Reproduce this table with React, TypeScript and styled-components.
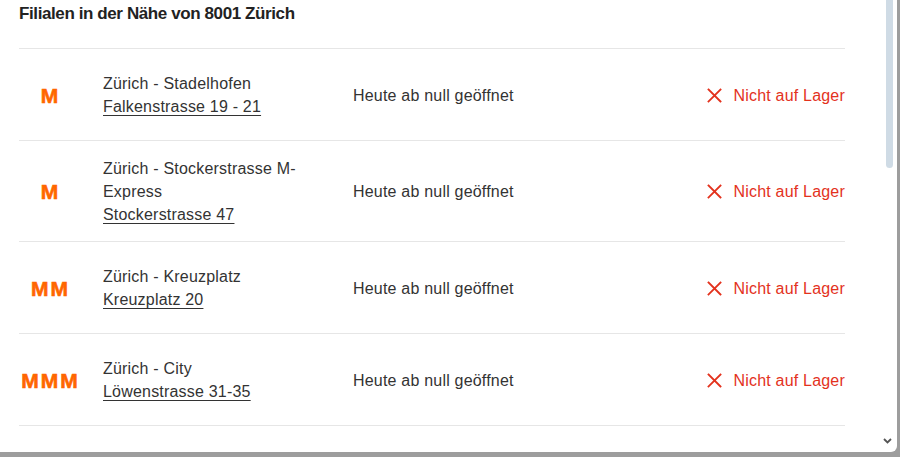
import styled, { createGlobalStyle } from 'styled-components';

const GlobalStyle = createGlobalStyle`
  html, body {
    margin: 0;
    padding: 0;
    background: #9d9d9d;
  }
  * {
    box-sizing: border-box;
  }
`;

const Backdrop = styled.div`
  width: 900px;
  height: 457px;
  overflow: hidden;
  background: #9d9d9d;
`;

const Panel = styled.div`
  position: relative;
  width: 897px;
  height: 452px;
  background: #fff;
  border-bottom-right-radius: 6px;
  overflow: hidden;
  font-family: 'Liberation Sans', Arial, sans-serif;
  color: #333;
`;

const Content = styled.div`
  width: 845px;
  padding-left: 19px;
`;

const Title = styled.h2`
  margin: 0;
  padding: 2px 0 22px;
  font-size: 17px;
  line-height: 24px;
  font-weight: 700;
  letter-spacing: -0.4px;
  color: #222;
`;

const List = styled.ul`
  list-style: none;
  margin: 0;
  padding: 0;
  border-top: 1px solid #e6e6e6;
`;

const Row = styled.li`
  display: grid;
  grid-template-columns: 84px 250px 1fr auto;
  align-items: center;
  min-height: 92px;
  padding: 16px 0 15px;
  border-bottom: 1px solid #e6e6e6;
  font-size: 16px;
  line-height: 23px;
  letter-spacing: 0.2px;
`;

const Logo = styled.div`
  width: 61px;
  text-align: center;
  font-size: 21px;
  line-height: 23px;
  font-weight: 700;
  letter-spacing: 2px;
  padding-left: 2px;
  color: #ff6600;
  -webkit-text-stroke: 0.6px #ff6600;
`;

const Store = styled.div`
  padding-right: 20px;
`;

const StoreName = styled.div``;

const Address = styled.a`
  display: block;
  color: #333;
  text-decoration: underline;
  text-underline-offset: 3px;
  text-decoration-thickness: 1px;
`;

const Hours = styled.div``;

const Stock = styled.div`
  display: flex;
  align-items: center;
  gap: 11px;
  color: #e3321d;
`;

const ScrollThumb = styled.div`
  position: absolute;
  top: 0;
  right: 4px;
  width: 7px;
  height: 168px;
  background: #cfdbe5;
  border-radius: 0 0 4px 4px;
`;

const ScrollArrow = styled.svg`
  position: absolute;
  right: 5px;
  bottom: 8px;
`;

const stores = [
  { logo: 'M', name: 'Zürich - Stadelhofen', address: 'Falkenstrasse 19 - 21' },
  { logo: 'M', name: 'Zürich - Stockerstrasse M-Express', address: 'Stockerstrasse 47' },
  { logo: 'MM', name: 'Zürich - Kreuzplatz', address: 'Kreuzplatz 20' },
  { logo: 'MMM', name: 'Zürich - City', address: 'Löwenstrasse 31-35' },
];

const CrossIcon = () => (
  <svg width="15" height="15" viewBox="0 0 15 15" fill="none">
    <path d="M1.5 1.5 L13.5 13.5 M13.5 1.5 L1.5 13.5" stroke="#e3321d" strokeWidth="1.8" strokeLinecap="square" />
  </svg>
);

const App = () => {
  return (
    <>
      <GlobalStyle />
      <Backdrop>
        <Panel>
          <Content>
            <Title>Filialen in der Nähe von 8001 Zürich</Title>
            <List>
              {stores.map((s) => (
                <Row key={s.name}>
                  <Logo>{s.logo}</Logo>
                  <Store>
                    <StoreName>{s.name}</StoreName>
                    <Address href="#">{s.address}</Address>
                  </Store>
                  <Hours>Heute ab null geöffnet</Hours>
                  <Stock>
                    <CrossIcon />
                    Nicht auf Lager
                  </Stock>
                </Row>
              ))}
            </List>
          </Content>
          <ScrollThumb />
          <ScrollArrow width="9" height="6" viewBox="0 0 9 6" fill="none">
            <path d="M1 1 L4.5 4.5 L8 1" stroke="#555" strokeWidth="1.8" />
          </ScrollArrow>
        </Panel>
      </Backdrop>
    </>
  );
};

export default App;
